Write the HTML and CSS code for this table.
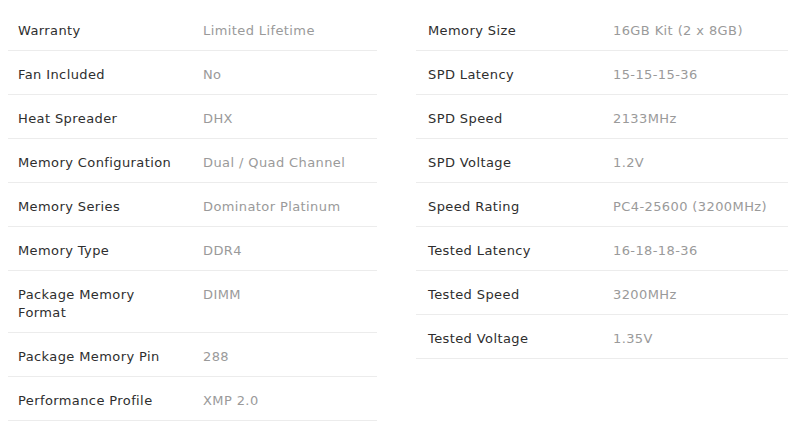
FILE: index.html
```html
<!DOCTYPE html>
<html>
<head>
<meta charset="utf-8">
<link rel="stylesheet" href="styles.css">
</head>
<body>
<div class="specs">
  <div class="col">
    <div class="row"><div class="k">Warranty</div><div class="v">Limited Lifetime</div></div>
    <div class="row"><div class="k">Fan Included</div><div class="v">No</div></div>
    <div class="row"><div class="k">Heat Spreader</div><div class="v">DHX</div></div>
    <div class="row"><div class="k">Memory Configuration</div><div class="v">Dual / Quad Channel</div></div>
    <div class="row"><div class="k">Memory Series</div><div class="v">Dominator Platinum</div></div>
    <div class="row"><div class="k">Memory Type</div><div class="v">DDR4</div></div>
    <div class="row"><div class="k">Package Memory<br>Format</div><div class="v">DIMM</div></div>
    <div class="row"><div class="k">Package Memory Pin</div><div class="v">288</div></div>
    <div class="row"><div class="k">Performance Profile</div><div class="v">XMP 2.0</div></div>
  </div>
  <div class="col">
    <div class="row"><div class="k">Memory Size</div><div class="v">16GB Kit (2 x 8GB)</div></div>
    <div class="row"><div class="k">SPD Latency</div><div class="v">15-15-15-36</div></div>
    <div class="row"><div class="k">SPD Speed</div><div class="v">2133MHz</div></div>
    <div class="row"><div class="k">SPD Voltage</div><div class="v">1.2V</div></div>
    <div class="row"><div class="k">Speed Rating</div><div class="v">PC4-25600 (3200MHz)</div></div>
    <div class="row"><div class="k">Tested Latency</div><div class="v">16-18-18-36</div></div>
    <div class="row"><div class="k">Tested Speed</div><div class="v">3200MHz</div></div>
    <div class="row"><div class="k">Tested Voltage</div><div class="v">1.35V</div></div>
  </div>
</div>
</body>
</html>
```
FILE: styles.css
```css
html, body {
  margin: 0;
  padding: 0;
  background: #ffffff;
}
body {
  font-family: "DejaVu Sans", sans-serif;
  font-size: 13px;
  line-height: 18px;
  letter-spacing: 0.4px;
}
.specs {
  display: grid;
  grid-template-columns: 369px 372px;
  column-gap: 39px;
  align-items: start;
  padding: 7px 8px 0 8px;
}
.row {
  display: grid;
  grid-template-columns: 185px 1fr;
  padding: 15px 10px 10px 10px;
  border-bottom: 1px solid #ececec;
}
.col + .col .row {
  padding-left: 12px;
}
.k {
  color: #2e2e2e;
  white-space: nowrap;
}
.v {
  color: #9a9a9a;
  white-space: nowrap;
}
```
